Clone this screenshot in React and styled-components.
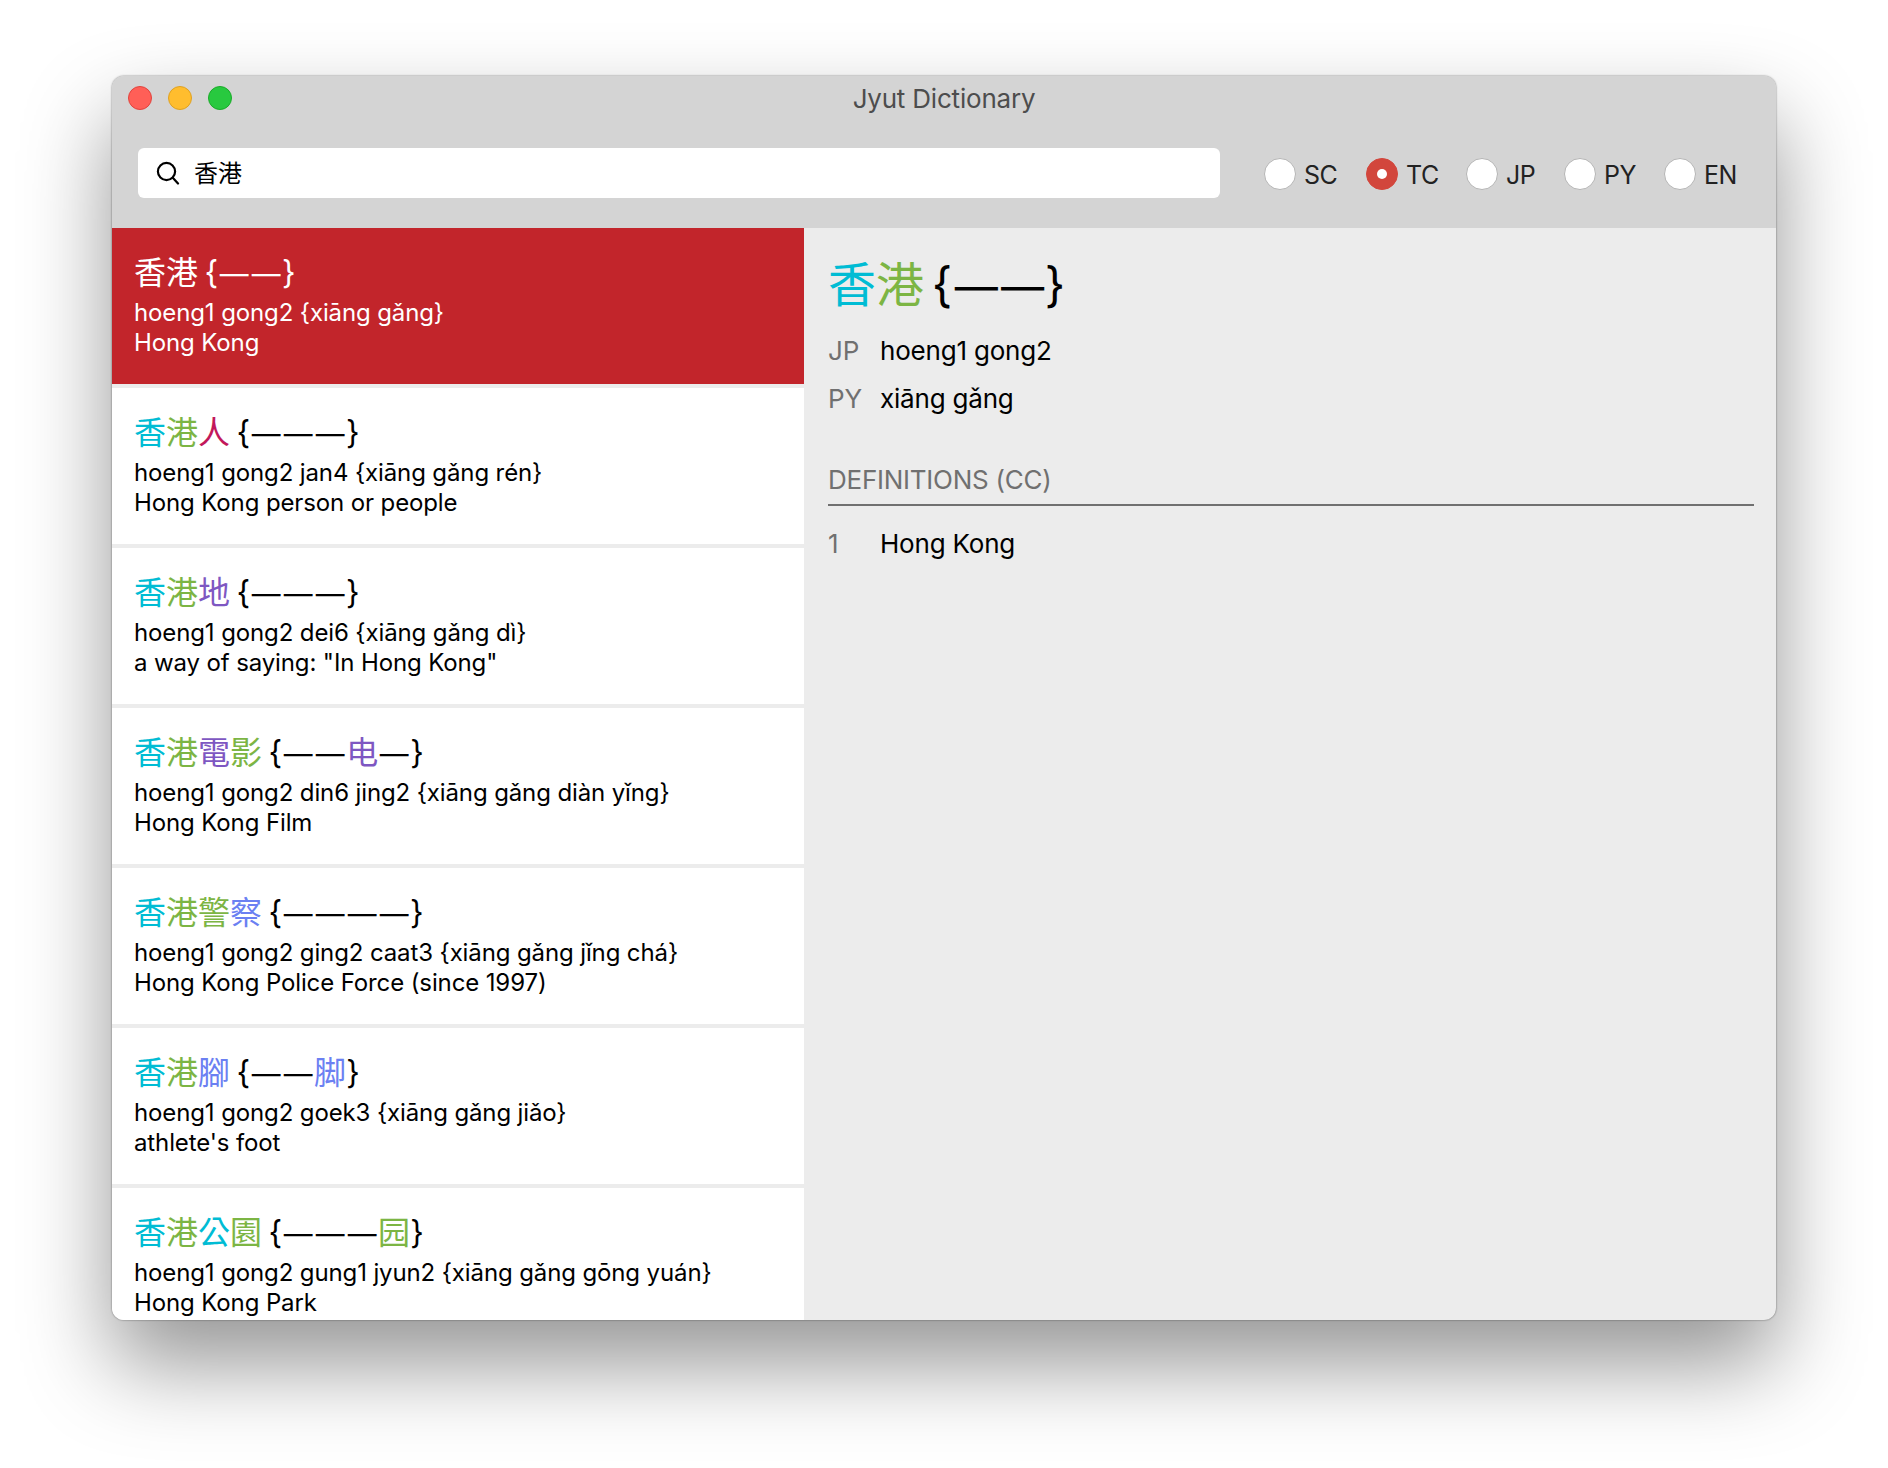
import React from "react";
import styled, { createGlobalStyle } from "styled-components";

const TONE = {
  1: "#00bcd4",
  2: "#7cb544",
  3: "#6b80f2",
  4: "#c2185b",
  6: "#7e57c2",
};

const ENTRIES = [
  {
    trad: [["香", 1], ["港", 2]],
    simp: ["—", "—"],
    reading: "hoeng1 gong2 {xiāng gǎng}",
    gloss: "Hong Kong",
  },
  {
    trad: [["香", 1], ["港", 2], ["人", 4]],
    simp: ["—", "—", "—"],
    reading: "hoeng1 gong2 jan4 {xiāng gǎng rén}",
    gloss: "Hong Kong person or people",
  },
  {
    trad: [["香", 1], ["港", 2], ["地", 6]],
    simp: ["—", "—", "—"],
    reading: "hoeng1 gong2 dei6 {xiāng gǎng dì}",
    gloss: 'a way of saying: "In Hong Kong"',
  },
  {
    trad: [["香", 1], ["港", 2], ["電", 6], ["影", 2]],
    simp: ["—", "—", ["电", 6], "—"],
    reading: "hoeng1 gong2 din6 jing2 {xiāng gǎng diàn yǐng}",
    gloss: "Hong Kong Film",
  },
  {
    trad: [["香", 1], ["港", 2], ["警", 2], ["察", 3]],
    simp: ["—", "—", "—", "—"],
    reading: "hoeng1 gong2 ging2 caat3 {xiāng gǎng jǐng chá}",
    gloss: "Hong Kong Police Force (since 1997)",
  },
  {
    trad: [["香", 1], ["港", 2], ["腳", 3]],
    simp: ["—", "—", ["脚", 3]],
    reading: "hoeng1 gong2 goek3 {xiāng gǎng jiǎo}",
    gloss: "athlete's foot",
  },
  {
    trad: [["香", 1], ["港", 2], ["公", 1], ["園", 2]],
    simp: ["—", "—", "—", ["园", 2]],
    reading: "hoeng1 gong2 gung1 jyun2 {xiāng gǎng gōng yuán}",
    gloss: "Hong Kong Park",
  },
];

const SCRIPTS = [
  { label: "SC", width: 102 },
  { label: "TC", width: 100, on: true },
  { label: "JP", width: 98 },
  { label: "PY", width: 100 },
  { label: "EN", width: 76 },
];

const GlobalStyle = createGlobalStyle`
  html, body {
    margin: 0;
    padding: 0;
    background: #fff;
  }
  body {
    font-family: Inter, "Noto Sans CJK TC", sans-serif;
    height: 1468px;
    overflow: hidden;
  }
`;

const Page = styled.div`
  padding: 76px 112px 0;
`;

const Window = styled.div`
  height: 1244px;
  display: flex;
  flex-direction: column;
  border-radius: 12px;
  overflow: hidden;
  background: #ececec;
  box-shadow: 0 0 2px rgba(0, 0, 0, 0.55), 0 44px 88px rgba(0, 0, 0, 0.42);
`;

const Toolbar = styled.div`
  flex: 0 0 152px;
  box-sizing: border-box;
  background: #d4d4d4;
  display: flex;
  flex-direction: column;
`;

const TitleBar = styled.div`
  height: 72px;
  position: relative;
  display: flex;
  align-items: center;
  justify-content: center;
  padding-bottom: 28px;
  box-sizing: border-box;
  font-size: 26px;
  letter-spacing: -0.2px;
  color: #4d4d4d;
`;

const Lights = styled.div`
  position: absolute;
  left: 16px;
  top: 10px;
  display: flex;
  gap: 16px;
`;

const Light = styled.span`
  width: 24px;
  height: 24px;
  box-sizing: border-box;
  border-radius: 50%;
  background: ${(p) => p.$fill};
  border: 1px solid ${(p) => p.$edge};
`;

const SearchRow = styled.div`
  display: flex;
  align-items: center;
  padding-left: 26px;
`;

const SearchBox = styled.div`
  flex: 0 0 1082px;
  height: 50px;
  box-sizing: border-box;
  background: #fff;
  border-radius: 6px;
  display: flex;
  align-items: center;
  padding-left: 18px;
  gap: 14px;
  font-size: 24px;
  color: #000;
`;

const SearchText = styled.span`
  padding-bottom: 4px;
`;

const Scripts = styled.div`
  display: flex;
  align-items: center;
  margin-left: 44px;
`;

const Script = styled.label`
  flex: 0 0 ${(p) => p.$width}px;
  display: flex;
  align-items: center;
  gap: 8px;
  font-size: 25px;
  letter-spacing: -0.5px;
  color: #222;
`;

const ScriptName = styled.span`
  margin-top: 3px;
`;

const Radio = styled.span`
  flex: 0 0 32px;
  height: 32px;
  margin-top: 1px;
  box-sizing: border-box;
  border-radius: 50%;
  display: flex;
  align-items: center;
  justify-content: center;
  background: ${(p) => (p.$on ? "#d2463c" : "#fff")};
  border: 1px solid ${(p) => (p.$on ? "#d2463c" : "#b5b5b5")};

  &::after {
    content: "";
    display: ${(p) => (p.$on ? "block" : "none")};
    width: 10px;
    height: 10px;
    border-radius: 50%;
    background: #fff;
  }
`;

const Panes = styled.div`
  flex: 1;
  min-height: 0;
  display: flex;
`;

const List = styled.div`
  flex: 0 0 692px;
  overflow: hidden;
  display: flex;
  flex-direction: column;
  gap: 4px;
`;

const Item = styled.div`
  flex: 0 0 156px;
  box-sizing: border-box;
  padding: 24px 22px 0;
  background: ${(p) => (p.$selected ? "#c2252b" : "#fff")};
  color: ${(p) => (p.$selected ? "#fff" : "#000")};
`;

const ItemTitle = styled.div`
  font-size: 32px;
  line-height: 42px;
  height: 46px;
  white-space: nowrap;
  word-spacing: -0.08em;
`;

const ItemLine = styled.div`
  font-size: 24px;
  line-height: 30px;
  letter-spacing: -0.12px;
  white-space: nowrap;
`;

const Tone = styled.span`
  color: ${(p) => (p.$plain ? "inherit" : TONE[p.$tone])};
`;

/* the original's dashes are one em wide with a small gap between them */
const Dash = styled.span`
  display: inline-block;
  font-size: 0.9em;
  width: 1.111em;
  text-align: center;
`;

const Detail = styled.div`
  flex: 1;
  padding: 24px 22px 0 24px;
  color: #000;
`;

const DetailTitle = styled.div`
  font-size: 48px;
  line-height: 66px;
  white-space: nowrap;
  word-spacing: -0.12em;
  margin-bottom: 8px;

  ${Dash} {
    margin-right: -0.04em;
  }
`;

const Row = styled.div`
  display: flex;
  font-size: 26px;
  line-height: 48px;
  letter-spacing: -0.2px;
`;

const RowKey = styled.span`
  flex: 0 0 52px;
  color: #707070;
`;

const SectionHead = styled.div`
  margin-top: 40px;
  font-size: 26px;
  line-height: 34px;
  letter-spacing: -0.25px;
  padding-bottom: 7px;
  color: #707070;
  border-bottom: 2px solid #707070;
  margin-bottom: 14px;
`;

function Headword({ trad, simp, plain }) {
  return (
    <>
      {trad.map(([ch, tone], i) => (
        <Tone key={i} $tone={tone} $plain={plain}>
          {ch}
        </Tone>
      ))}{" "}
      {"{"}
      {simp.map((s, i) =>
        Array.isArray(s) ? (
          <Tone key={i} $tone={s[1]} $plain={plain}>
            {s[0]}
          </Tone>
        ) : (
          <Dash key={i}>{s}</Dash>
        )
      )}
      {"}"}
    </>
  );
}

function SearchIcon() {
  return (
    <svg width="24" height="24" viewBox="0 0 24 24" fill="none" stroke="#000" strokeWidth="2.2" strokeLinecap="round">
      <circle cx="10.5" cy="10.5" r="8.6" />
      <path d="M17 17l5 5.5" />
    </svg>
  );
}

export default function App() {
  return (
    <Page>
      <GlobalStyle />
      <Window>
        <Toolbar>
          <TitleBar>
            <Lights>
              <Light $fill="#ff5f57" $edge="#e0443e" />
              <Light $fill="#ffbd2e" $edge="#dea123" />
              <Light $fill="#28c93f" $edge="#1aab29" />
            </Lights>
            Jyut Dictionary
          </TitleBar>
          <SearchRow>
            <SearchBox>
              <SearchIcon />
              <SearchText>香港</SearchText>
            </SearchBox>
            <Scripts>
              {SCRIPTS.map((s) => (
                <Script key={s.label} $width={s.width}>
                  <Radio $on={s.on} />
                  <ScriptName>{s.label}</ScriptName>
                </Script>
              ))}
            </Scripts>
          </SearchRow>
        </Toolbar>
        <Panes>
          <List>
            {ENTRIES.map((e, i) => (
              <Item key={i} $selected={i === 0}>
                <ItemTitle>
                  <Headword trad={e.trad} simp={e.simp} plain={i === 0} />
                </ItemTitle>
                <ItemLine>{e.reading}</ItemLine>
                <ItemLine>{e.gloss}</ItemLine>
              </Item>
            ))}
          </List>
          <Detail>
            <DetailTitle>
              <Headword trad={ENTRIES[0].trad} simp={ENTRIES[0].simp} />
            </DetailTitle>
            <Row>
              <RowKey>JP</RowKey>hoeng1 gong2
            </Row>
            <Row>
              <RowKey>PY</RowKey>xiāng gǎng
            </Row>
            <SectionHead>DEFINITIONS (CC)</SectionHead>
            <Row>
              <RowKey>1</RowKey>Hong Kong
            </Row>
          </Detail>
        </Panes>
      </Window>
    </Page>
  );
}
